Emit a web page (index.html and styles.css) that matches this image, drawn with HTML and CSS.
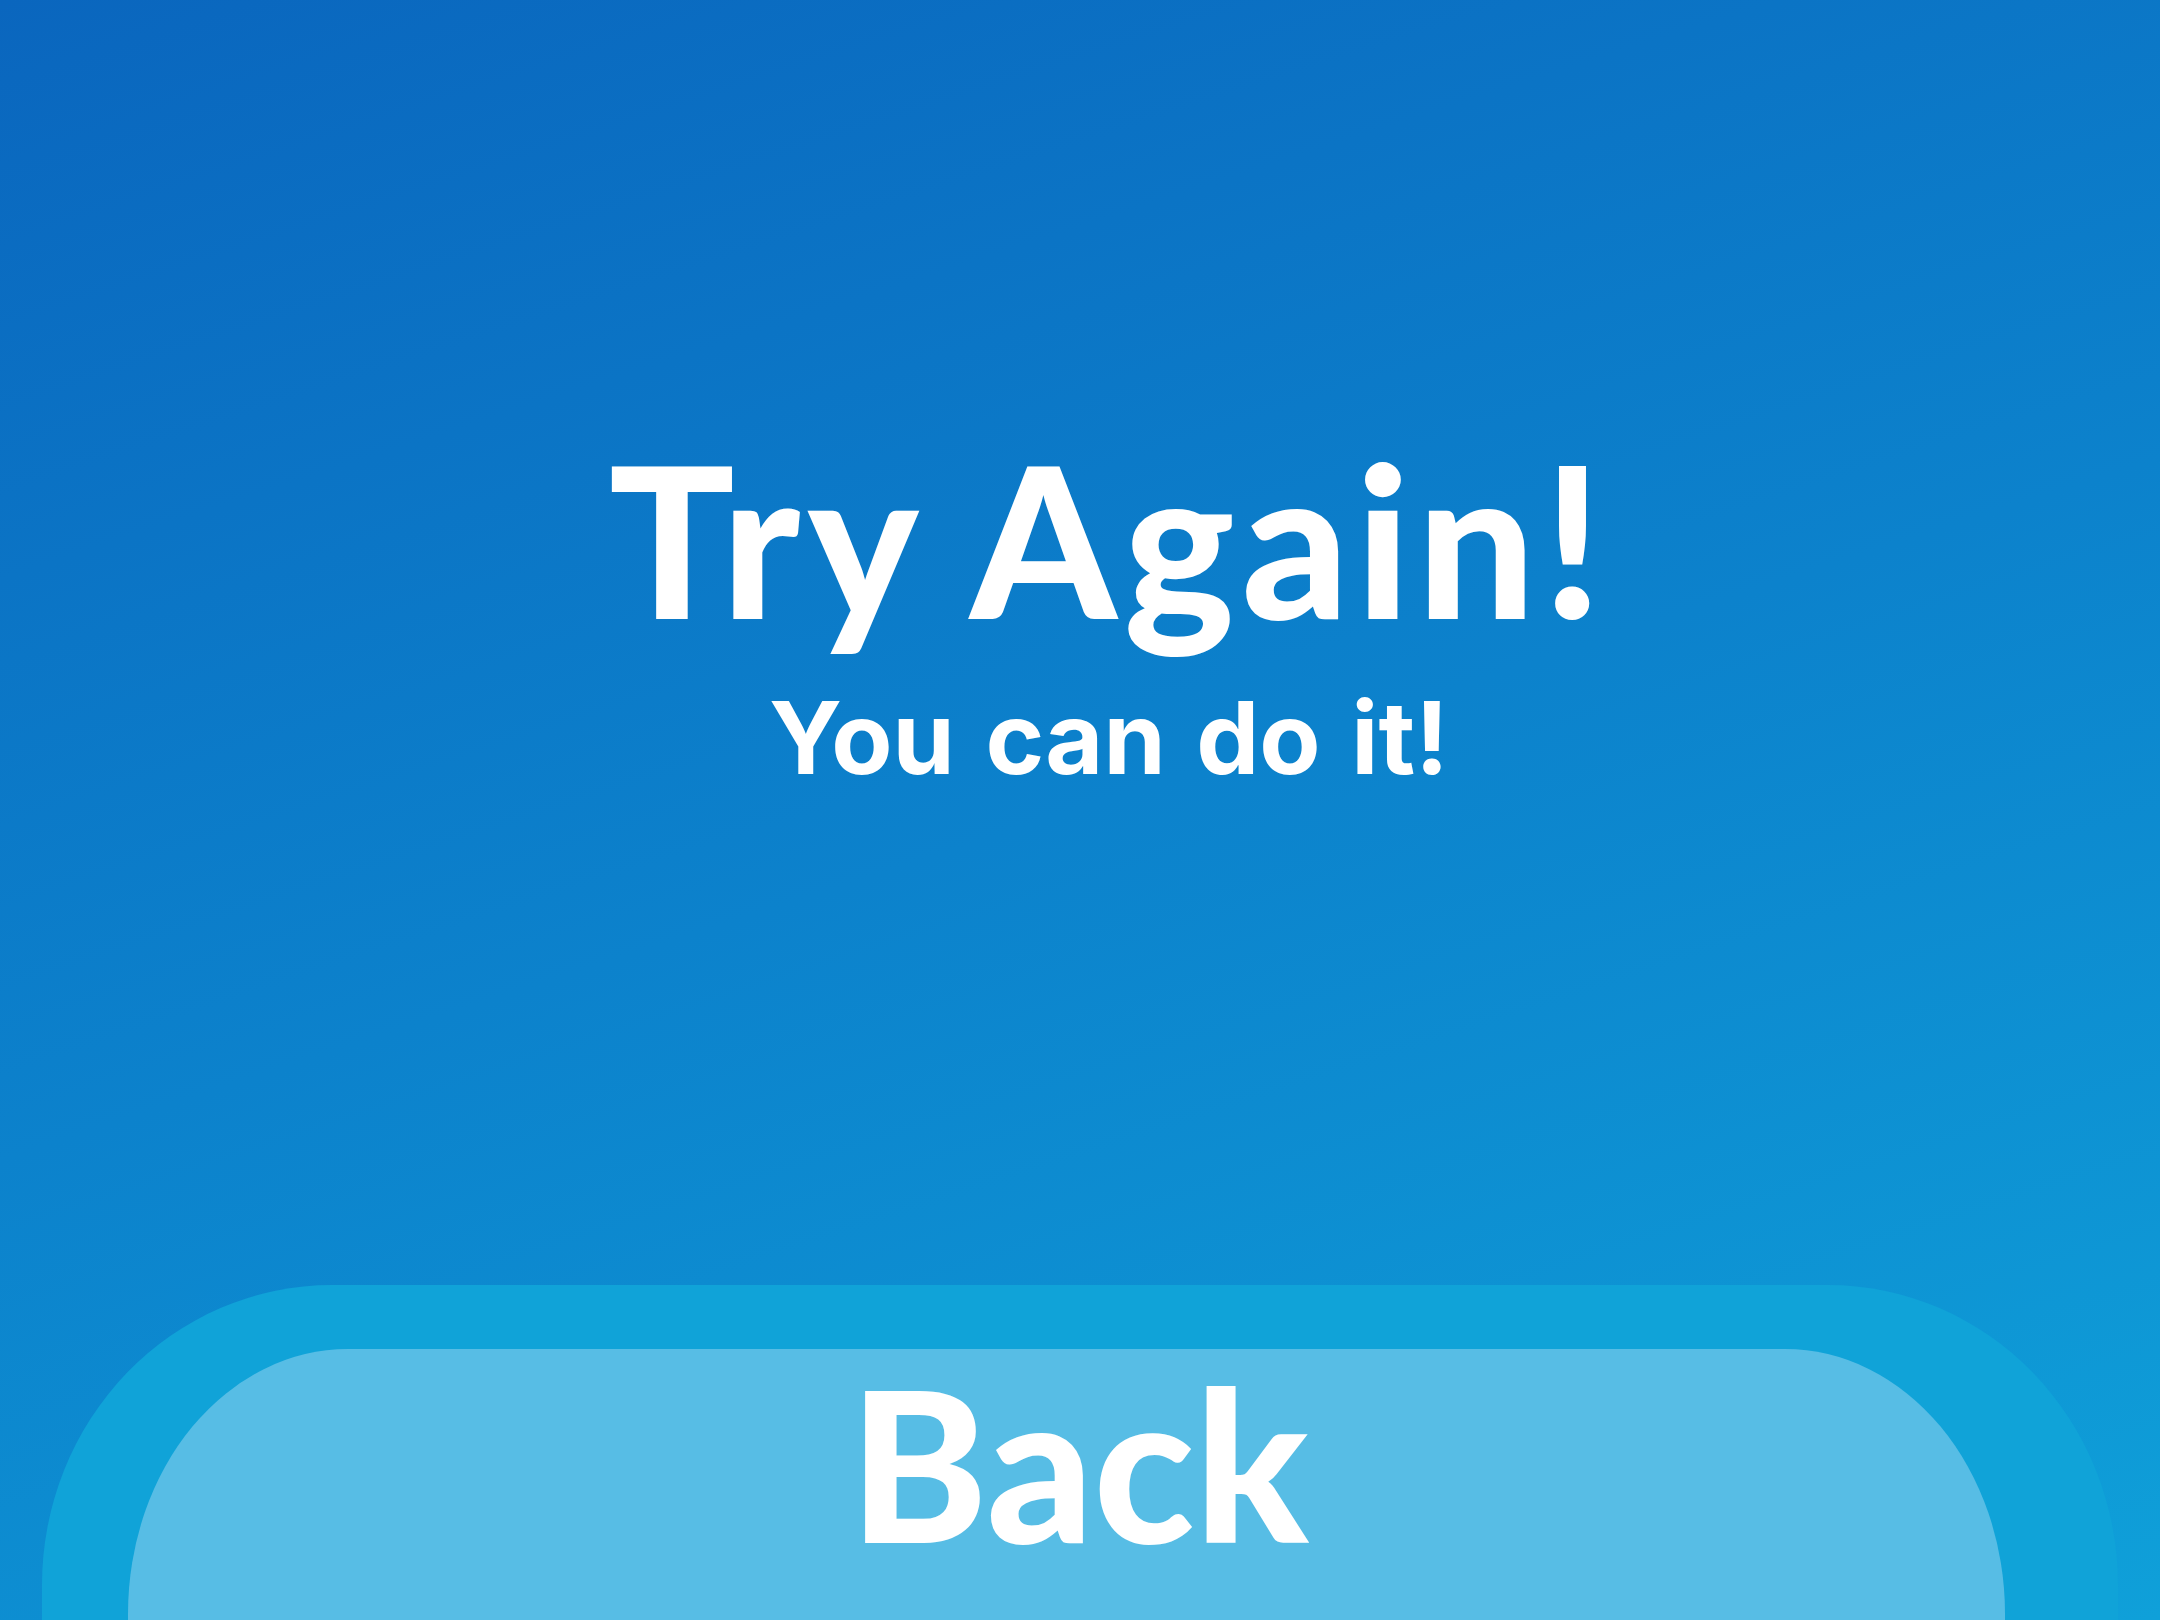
FILE: index.html
```html
<!DOCTYPE html>
<html lang="en">
<head>
<meta charset="utf-8">
<title>Try Again!</title>
<link rel="stylesheet" href="styles.css">
</head>
<body>
<main class="screen">
  <section class="message">
    <h1 class="title">Try Again!</h1>
    <p class="subtitle">You can do it!</p>
  </section>
  <div class="button-wrap">
    <button class="back-btn" type="button"><span class="back-label">Back</span></button>
  </div>
</main>
</body>
</html>
```

FILE: styles.css
```css
* { box-sizing: border-box; }
html, body {
  margin: 0;
  padding: 0;
  width: 2160px;
  height: 1620px;
  overflow: hidden;
}
body {
  background: linear-gradient(162deg, #0a66be 0%, #0c82cc 50%, #0fa0d9 100%);
  color: #ffffff;
}
.screen {
  width: 2160px;
  height: 1620px;
  display: flex;
  flex-direction: column;
  justify-content: space-between;
  overflow: hidden;
}
.message {
  padding-top: 434px;
  padding-left: 58px;
  display: flex;
  flex-direction: column;
  align-items: center;
}
.title {
  margin: 0;
  font-family: "Lato", "Liberation Sans", sans-serif;
  font-weight: 900;
  font-size: 209px;
  line-height: 1;
  letter-spacing: 7px;
}
.subtitle {
  margin: 45px 0 0;
  font-family: "Inter", "Liberation Sans", sans-serif;
  font-weight: 700;
  font-size: 100px;
  line-height: 1;
  word-spacing: 7px;
}
.button-wrap {
  flex: none;
  margin: 0 42px -120px;
  height: 455px;
  padding: 64px 113px 0 86px;
  background: #10a3d8;
  border-radius: 290px 290px 0 0 / 300px 300px 0 0;
  display: flex;
}
.back-btn {
  flex: 1;
  border: 0;
  margin: 0;
  padding: 0 0 0 25px;
  background: #57bde5;
  border-radius: 220px 220px 0 0 / 265px 265px 0 0;
  color: #ffffff;
  display: flex;
  align-items: flex-start;
  justify-content: center;
  cursor: pointer;
}
.back-label {
  margin-top: 9px;
  font-family: "Lato", "Liberation Sans", sans-serif;
  font-weight: 900;
  font-size: 209px;
  line-height: 1;
}
```
